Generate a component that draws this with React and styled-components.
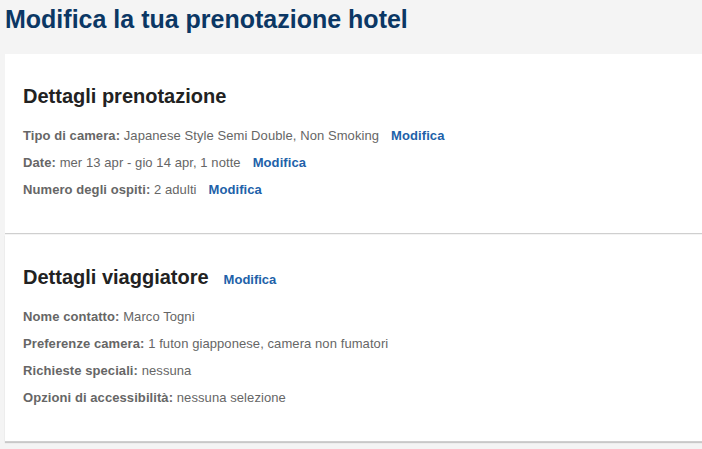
import React from "react";
import styled, { createGlobalStyle } from "styled-components";

const Global = createGlobalStyle`
  html, body { margin: 0; padding: 0; background: #f4f4f4; }
  body { font-family: Arial, "Liberation Sans", sans-serif; }
`;

const Page = styled.div`
  padding: 0 0 0 5px;
  min-height: 449px;
  box-sizing: border-box;
`;

const Title = styled.h1`
  margin: 0;
  height: 54px;
  padding-top: 5px;
  box-sizing: border-box;
  font-size: 25px;
  line-height: 29px;
  font-weight: bold;
  color: #0b3764;
`;

const Card = styled.section`
  background: #fff;
  padding: 30px 18px 30px;
  border-bottom: 1px solid #cfcfcf;
  box-shadow: ${(p) => (p.$shadow ? "0 1px 1px rgba(0,0,0,0.18)" : "none")};
  margin-bottom: ${(p) => (p.$shadow ? "0" : "1px")};
`;

const HeadingRow = styled.div`
  display: flex;
  align-items: baseline;
  gap: 15px;
  margin-bottom: 14px;
`;

const Heading = styled.h2`
  margin: 0;
  font-size: 20px;
  line-height: 24px;
  font-weight: bold;
  color: #222;
`;

const Row = styled.div`
  font-size: 13px;
  line-height: 27px;
  letter-spacing: 0.08px;
  color: #666;
`;

const Label = styled.b`
  font-weight: bold;
`;

const Link = styled.a`
  font-weight: bold;
  color: #2161a9;
  font-size: 13px;
  text-decoration: none;
  margin-left: ${(p) => (p.$inline ? "12px" : "0")};
`;

const Item = ({ label, value, edit }) => (
  <Row>
    <Label>{label}:</Label> {value}
    {edit && <Link href="#" $inline>Modifica</Link>}
  </Row>
);

export default function App() {
  return (
    <>
      <Global />
      <Page>
        <Title>Modifica la tua prenotazione hotel</Title>
        <Card>
          <HeadingRow>
            <Heading>Dettagli prenotazione</Heading>
          </HeadingRow>
          <Item label="Tipo di camera" value="Japanese Style Semi Double, Non Smoking" edit />
          <Item label="Date" value="mer 13 apr - gio 14 apr, 1 notte" edit />
          <Item label="Numero degli ospiti" value="2 adulti" edit />
        </Card>
        <Card $shadow>
          <HeadingRow>
            <Heading>Dettagli viaggiatore</Heading>
            <Link href="#">Modifica</Link>
          </HeadingRow>
          <Item label="Nome contatto" value="Marco Togni" />
          <Item label="Preferenze camera" value="1 futon giapponese, camera non fumatori" />
          <Item label="Richieste speciali" value="nessuna" />
          <Item label="Opzioni di accessibilità" value="nessuna selezione" />
        </Card>
      </Page>
    </>
  );
}
